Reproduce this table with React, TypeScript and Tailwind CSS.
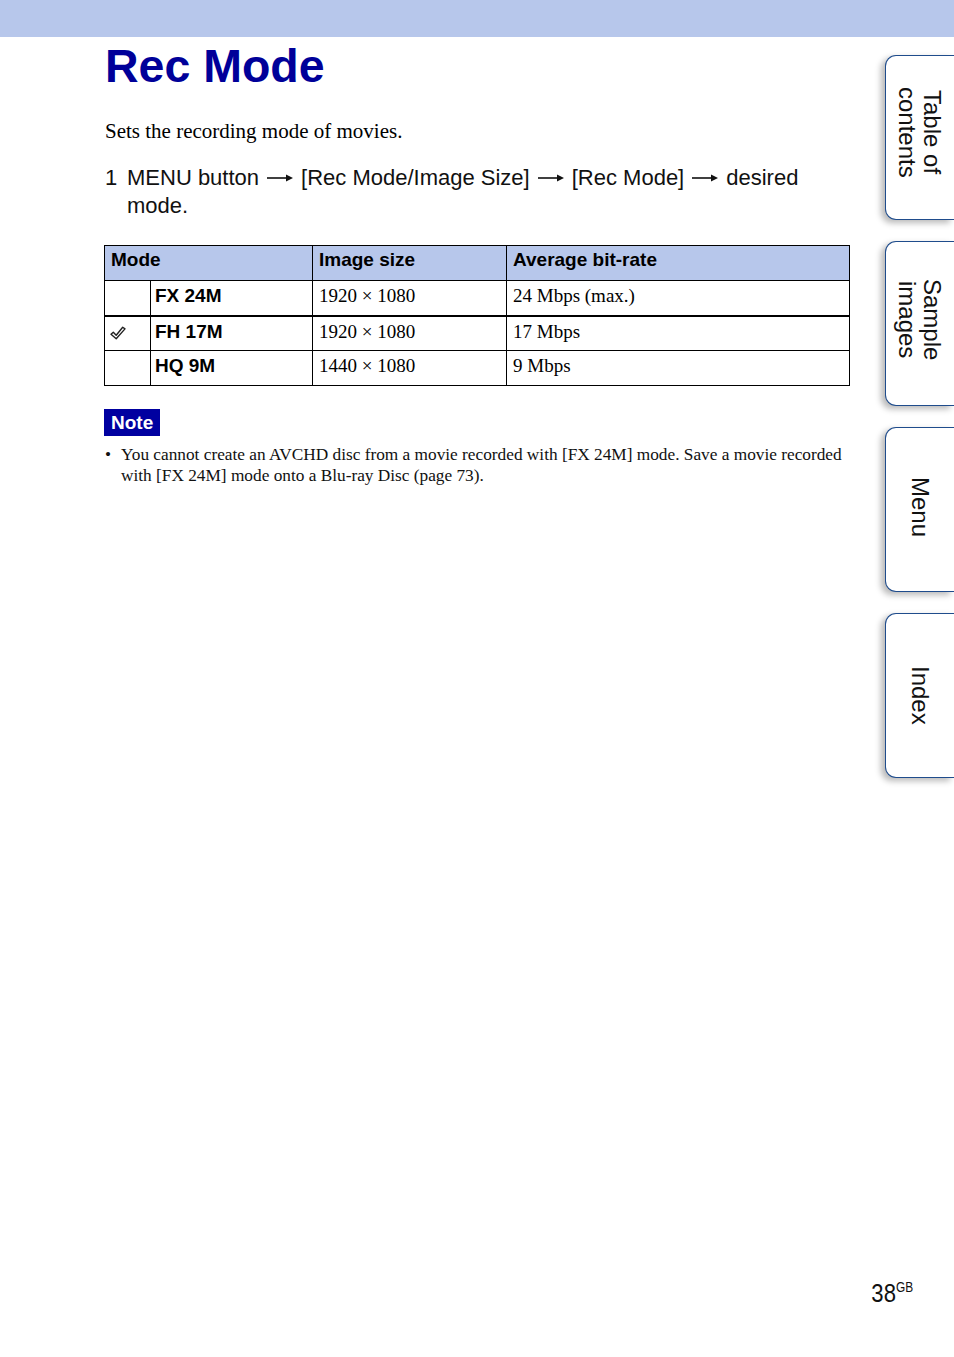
import React from "react";

const sans = "font-['Liberation_Sans',Arial,sans-serif]";
const serif = "font-['Liberation_Serif','Times_New_Roman',serif]";

function Check() {
  return (
    <svg width="16" height="14" viewBox="0 0 16 14" className="block">
      <path
        d="M1 8.2 L3.3 6.2 L6.2 9.2 L12.7 1.2 L15 2.9 L6.2 12.8 Z"
        fill="white"
        stroke="#222"
        strokeWidth="1.4"
        strokeLinejoin="round"
      />
    </svg>
  );
}

function Arrow() {
  return (
    <svg width="26" height="10" viewBox="0 0 26 10" className="inline-block align-middle mx-[8px] relative top-[-1px]">
      <line x1="0" y1="5" x2="20" y2="5" stroke="#111" strokeWidth="1.6" />
      <path d="M19 1.5 L26 5 L19 8.5 Z" fill="#111" />
    </svg>
  );
}

function Tab({ lines, pb }: { lines: string[]; pb: string }) {
  return (
    <div
      className={`h-[165px] w-[69px] rounded-l-[11px] border-[1.5px] border-r-0 border-[#1f4c8c] bg-white shadow-[-4px_3px_6px_rgba(0,0,0,0.28)] flex items-center justify-center ${pb}`}
    >
      <div
        className={`${sans} [writing-mode:vertical-rl] text-[24px] leading-[25px] text-[#111] text-center`}
      >
        {lines.map((l) => (
          <div key={l}>{l}</div>
        ))}
      </div>
    </div>
  );
}

export default function App() {
  const rows = [
    { check: false, mode: "FX 24M", size: "1920 × 1080", rate: "24 Mbps (max.)" },
    { check: true, mode: "FH 17M", size: "1920 × 1080", rate: "17 Mbps" },
    { check: false, mode: "HQ 9M", size: "1440 × 1080", rate: "9 Mbps" },
  ];
  return (
    <div className="w-[954px] h-[1357px] bg-white flex flex-col text-black overflow-hidden">
      <div className="h-[37px] bg-[#b7c7eb] shrink-0" />
      <div className="flex flex-1">
        <div className="w-[850px] pl-[104px] shrink-0">
          <h1
            className={`${sans} font-bold text-[46.5px] leading-[50px] text-[#000099] mt-[4px] pl-[1px]`}
          >
            Rec Mode
          </h1>
          <p className={`${serif} text-[21px] leading-[24px] mt-[28px] pl-[1px]`}>
            Sets the recording mode of movies.
          </p>
          <div className={`${sans} flex text-[22px] leading-[28px] mt-[21px] pl-[1px] text-[#111]`}>
            <span className="w-[22px] shrink-0">1</span>
            <span>
              MENU button
              <Arrow />
              [Rec Mode/Image Size]
              <Arrow />
              [Rec Mode]
              <Arrow />
              desired
              <br />
              mode.
            </span>
          </div>
          <table className="mt-[25px] w-[746px] border-collapse border border-black">
            <colgroup>
              <col className="w-[46px]" />
              <col className="w-[162px]" />
              <col className="w-[194px]" />
              <col />
            </colgroup>
            <thead>
              <tr className={`${sans} font-bold text-[19px] leading-[22px] bg-[#b7c7eb] h-[35px]`}>
                <th colSpan={2} className="border border-black text-left align-top pt-[3px] px-[6px] font-bold">
                  Mode
                </th>
                <th className="border border-black text-left align-top pt-[3px] px-[6px] font-bold">
                  Image size
                </th>
                <th className="border border-black text-left align-top pt-[3px] px-[6px] font-bold">
                  Average bit-rate
                </th>
              </tr>
            </thead>
            <tbody>
              {rows.map((r, i) => (
                <tr
                  key={r.mode}
                  className={`h-[35px] ${i === 0 ? "border-b-2 border-black" : ""}`}
                >
                  <td className="border border-black align-middle px-[5px]">
                    {r.check ? <Check /> : null}
                  </td>
                  <td
                    className={`${sans} font-bold text-[19px] leading-[22px] border border-black align-top pt-[4px] px-[4px]`}
                  >
                    {r.mode}
                  </td>
                  <td
                    className={`${serif} text-[19px] leading-[22px] border border-black align-top pt-[4px] px-[6px]`}
                  >
                    {r.size}
                  </td>
                  <td
                    className={`${serif} text-[19px] leading-[22px] border border-black align-top pt-[4px] px-[6px]`}
                  >
                    {r.rate}
                  </td>
                </tr>
              ))}
            </tbody>
          </table>
          <div
            className={`${sans} mt-[23px] inline-block bg-[#0000a0] text-white font-bold text-[19px] leading-[27px] px-[7px] h-[27px]`}
          >
            Note
          </div>
          <div className={`${serif} flex text-[17.3px] leading-[21px] mt-[8px] pl-[1px] text-[#111]`}>
            <span className="w-[16px] shrink-0">•</span>
            <span className="whitespace-nowrap">
              You cannot create an AVCHD disc from a movie recorded with [FX 24M] mode. Save a movie recorded
              <br />
              with [FX 24M] mode onto a Blu-ray Disc (page 73).
            </span>
          </div>
        </div>
        <div className="ml-auto w-[69px] pt-[18px] flex flex-col gap-[21px]">
          <Tab lines={["Table of", "contents"]} pb="pb-[10px]" />
          <Tab lines={["Sample", "images"]} pb="pb-[8px]" />
          <Tab lines={["Menu"]} pb="pb-[4px]" />
          <Tab lines={["Index"]} pb="pb-0" />
        </div>
      </div>
      <div className="flex justify-end pr-[38px] pb-[50px]">
        <div className={`${sans} text-[#111] flex items-start`}>
          <span className="inline-block text-[26px] leading-[28px] scale-x-[0.85] origin-right">38</span>
          <span className="inline-block text-[14px] leading-[16px] scale-x-[0.85] origin-left">GB</span>
        </div>
      </div>
    </div>
  );
}
